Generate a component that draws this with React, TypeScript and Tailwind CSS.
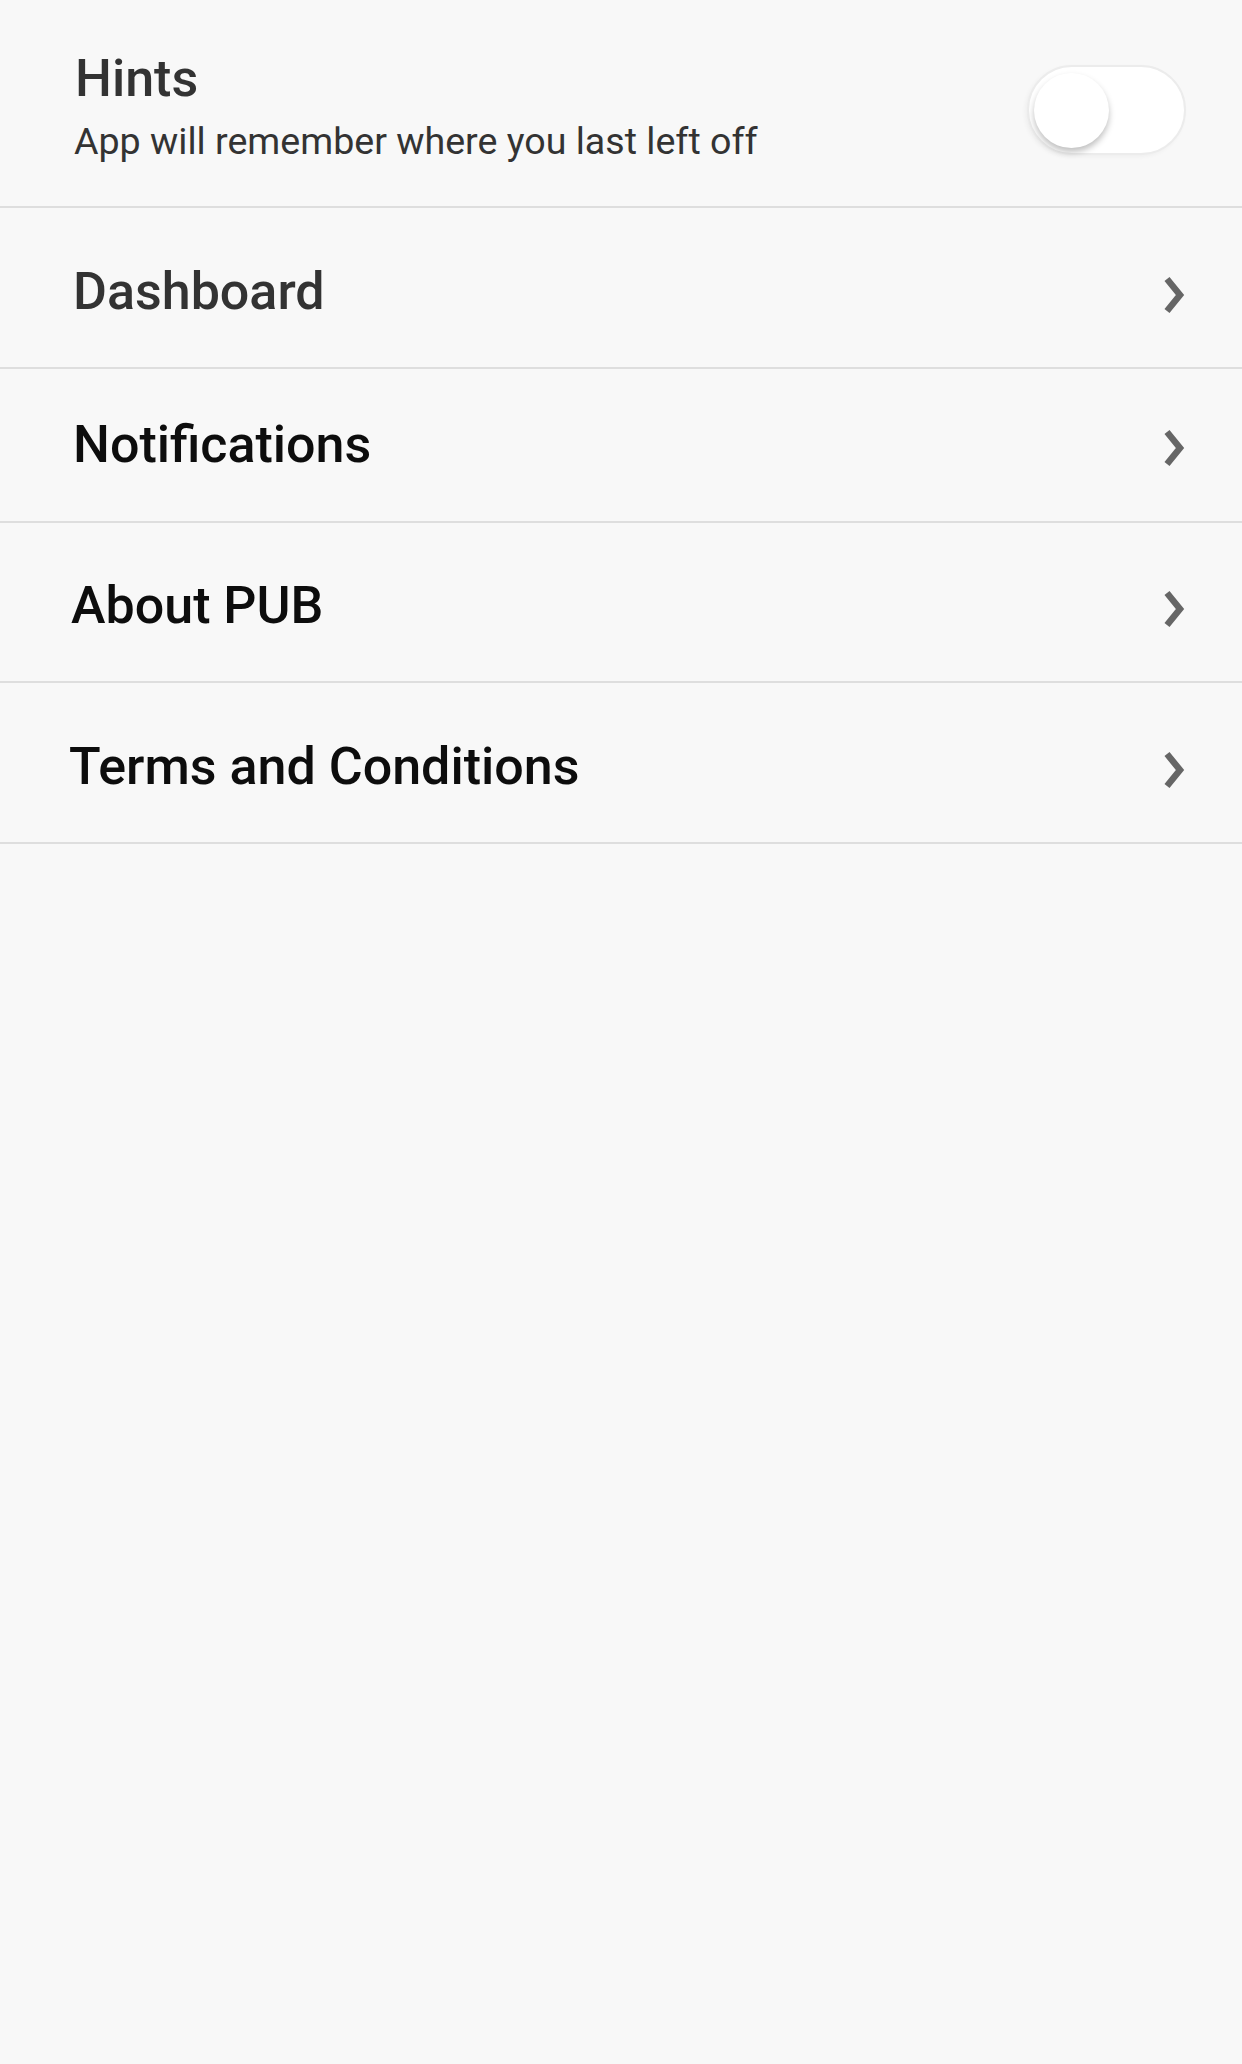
const rows = [
  { label: "Dashboard", h: "h-[161px]", pt: "pt-[8px]", pl: "pl-[73px]", color: "text-[#333333]" },
  { label: "Notifications", h: "h-[154px]", pt: "pt-[0px]", pl: "pl-[73px]", color: "text-[#0d0d0d]" },
  { label: "About PUB", h: "h-[160px]", pt: "pt-[8px]", pl: "pl-[71px]", color: "text-[#0d0d0d]" },
  { label: "Terms and Conditions", h: "h-[161px]", pt: "pt-[8px]", pl: "pl-[69px]", color: "text-[#0d0d0d]" },
];

function Chevron() {
  return (
    <svg width="26" height="40" viewBox="0 0 26 40" className="mt-[6px]">
      <path
        d="M5 4 L18 20 L5 36"
        fill="none"
        stroke="#666666"
        strokeWidth="6.5"
        strokeLinejoin="miter"
      />
    </svg>
  );
}

function Toggle() {
  return (
    <div className="mt-[65px] mr-[56px] h-[90px] w-[159px] rounded-full border-2 border-[#ececec] bg-white shadow-[-2px_2px_4px_rgba(0,0,0,0.04)]">
      <div className="ml-[5px] mt-[6px] h-[75px] w-[75px] rounded-full bg-white shadow-[0_4px_6px_rgba(0,0,0,0.25)]" />
    </div>
  );
}

export default function App() {
  return (
    <div
      className="min-h-screen w-full bg-[#f8f8f8]"
      style={{ fontFamily: "Roboto, 'Noto Sans', sans-serif" }}
    >
      <div className="flex h-[208px] justify-between border-b-2 border-[#dedede]">
        <div className="pt-[49px]">
          <div className="pl-[75px] text-[52px] font-medium leading-[60px] text-[#333333]">
            Hints
          </div>
          <div className="mt-[10px] pl-[74px] text-[37.6px] leading-[44px] text-[#333333]">
            App will remember where you last left off
          </div>
        </div>
        <Toggle />
      </div>

      {rows.map((row) => (
        <div
          key={row.label}
          className={`flex items-center justify-between border-b-2 border-[#dedede] pr-[54px] ${row.h} ${row.pt} ${row.pl}`}
        >
          <span className={`text-[52px] font-medium leading-none ${row.color}`}>
            {row.label}
          </span>
          <Chevron />
        </div>
      ))}
    </div>
  );
}
